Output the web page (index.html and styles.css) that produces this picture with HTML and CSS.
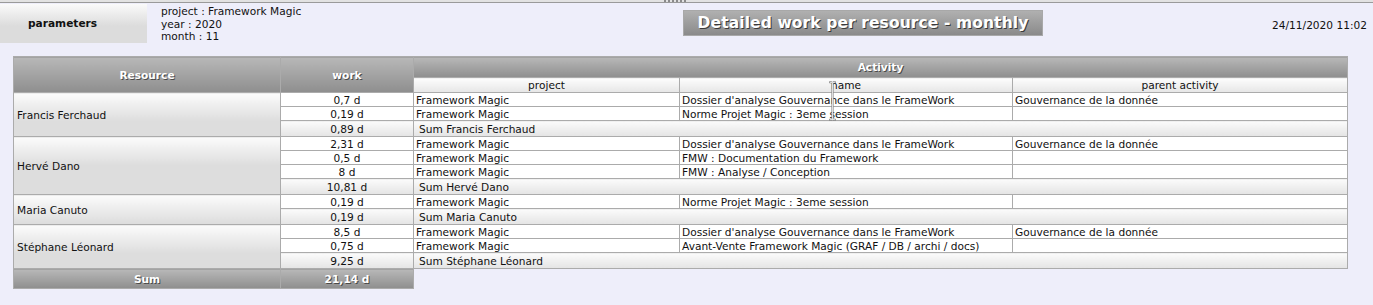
FILE: index.html
```html
<!DOCTYPE html>
<html>
<head>
<meta charset="utf-8">
<link rel="stylesheet" href="styles.css">
</head>
<body>
<div class="topbar"><span class="handle"></span></div>
<div class="header">
  <div class="params-btn">parameters</div>
  <div class="params-info">
    <div>project : Framework Magic</div>
    <div>year : 2020</div>
    <div>month : 11</div>
  </div>
  <div class="title-cell"><div class="title">Detailed work per resource - monthly</div></div>
  <div class="date">24/11/2020 11:02</div>
</div>
<table class="report">
  <colgroup>
    <col class="c-res"><col class="c-work"><col class="c-proj"><col class="c-name"><col class="c-parent">
  </colgroup>
  <thead>
    <tr class="h1">
      <th rowspan="2" class="dark span2">Resource</th>
      <th rowspan="2" class="dark span2">work</th>
      <th colspan="3" class="dark">Activity</th>
    </tr>
    <tr class="h2">
      <th class="light">project</th>
      <th class="light">name</th>
      <th class="light">parent activity</th>
    </tr>
  </thead>
  <tbody>
    <tr><td rowspan="3" class="res">Francis Ferchaud</td><td class="work">0,7 d</td><td>Framework Magic</td><td>Dossier d'analyse Gouvernance dans le FrameWork</td><td>Gouvernance de la donnée</td></tr>
    <tr><td class="work">0,19 d</td><td>Framework Magic</td><td>Norme Projet Magic : 3eme session</td><td></td></tr>
    <tr class="sum"><td class="work">0,89 d</td><td colspan="3" class="sumlabel">Sum Francis Ferchaud</td></tr>

    <tr><td rowspan="4" class="res">Hervé Dano</td><td class="work">2,31 d</td><td>Framework Magic</td><td>Dossier d'analyse Gouvernance dans le FrameWork</td><td>Gouvernance de la donnée</td></tr>
    <tr><td class="work">0,5 d</td><td>Framework Magic</td><td>FMW : Documentation du Framework</td><td></td></tr>
    <tr><td class="work">8 d</td><td>Framework Magic</td><td>FMW : Analyse / Conception</td><td></td></tr>
    <tr class="sum"><td class="work">10,81 d</td><td colspan="3" class="sumlabel">Sum Hervé Dano</td></tr>

    <tr><td rowspan="2" class="res">Maria Canuto</td><td class="work">0,19 d</td><td>Framework Magic</td><td>Norme Projet Magic : 3eme session</td><td></td></tr>
    <tr class="sum"><td class="work">0,19 d</td><td colspan="3" class="sumlabel">Sum Maria Canuto</td></tr>

    <tr><td rowspan="3" class="res">Stéphane Léonard</td><td class="work">8,5 d</td><td>Framework Magic</td><td>Dossier d'analyse Gouvernance dans le FrameWork</td><td>Gouvernance de la donnée</td></tr>
    <tr><td class="work">0,75 d</td><td>Framework Magic</td><td>Avant-Vente Framework Magic (GRAF / DB / archi / docs)</td><td></td></tr>
    <tr class="sum"><td class="work">9,25 d</td><td colspan="3" class="sumlabel">Sum Stéphane Léonard</td></tr>
  </tbody>
  <tfoot>
    <tr class="total"><td class="dark">Sum</td><td class="dark">21,14 d</td></tr>
  </tfoot>
</table>
<svg class="cursor" width="7" height="40" viewBox="0 0 7 40">
  <path d="M0.5 0.5 H2.8 L3.5 1.2 L4.2 0.5 H6.5 V2 H4.3 V38 H6.5 V39.5 H4.2 L3.5 38.8 L2.8 39.5 H0.5 V38 H2.7 V2 H0.5 Z" fill="#fff" stroke="#555" stroke-width="0.5"/>
</svg>
</body>
</html>
```

FILE: styles.css
```css
* { box-sizing: border-box; }
html, body { margin: 0; padding: 0; }
body {
  background: #eeeefa;
  font-family: "DejaVu Sans", Verdana, sans-serif;
  font-size: 10.6px;
  color: #111;
  position: relative;
  height: 305px;
  overflow: hidden;
}
.topbar {
  height: 3px;
  background: #e2e2e2;
  border-bottom: 1px solid #9a9a9a;
  position: relative;
}
.handle {
  position: absolute;
  left: 664px;
  top: 0;
  width: 22px;
  height: 2px;
  background: repeating-linear-gradient(90deg, #8a8a8a 0 2px, transparent 2px 4px);
}
.header {
  display: grid;
  grid-template-columns: 147px 536px 360px 1fr;
  height: 38px;
  margin-top: 1px;
}
.params-btn {
  background: linear-gradient(#fafafa, #dcdcdc 22px, #dcdcdc);
  font-weight: bold;
  display: flex;
  align-items: center;
  padding-left: 28px;
  padding-bottom: 1px;
}
.params-info {
  padding-left: 14px;
  padding-top: 1px;
  line-height: 12.5px;
}
.title-cell { padding-top: 6px; }
.title {
  height: 26px;
  background: linear-gradient(#b0b0b0, #8a8a8a);
  border: 1px solid #a8a8a8;
  color: #fff;
  font-weight: bold;
  font-size: 15.5px;
  text-align: center;
  line-height: 25px;
  text-shadow: 1px 1px 0 #3a3a3a;
  letter-spacing: 0.1px;
}
.date {
  text-align: right;
  padding-right: 6px;
  padding-top: 15px;
}
.report {
  margin: 14px 0 0 13px;
  border-collapse: collapse;
  table-layout: fixed;
  width: 1334px;
}
.c-res { width: 267px; }
.c-work { width: 133px; }
.c-proj { width: 266px; }
.c-name { width: 333px; }
.c-parent { width: 335px; }
.report th, .report td {
  border: 1px solid #ababab;
  padding: 0 2px;
  line-height: 13px;
  height: 14px;
  white-space: nowrap;
  overflow: hidden;
}
.report td { background: #fff; padding-top: 2px; line-height: 11px; }
.report .dark {
  background: linear-gradient(#b8b8b8, #8e8e8e);
  color: #fff;
  font-weight: bold;
  text-align: center;
  text-shadow: 1px 1px 0 #4a4a4a;
}
.h1 th { height: 21px; padding-top: 1px; }
.h1 th.span2 { padding-top: 2px; }
.h2 th { height: 15px; }
.report .light {
  background: linear-gradient(#fdfdfd, #e6e6e6);
  font-weight: normal;
  text-align: center;
}
.report td.res {
  background: linear-gradient(#fbfbfb, #dddddd 28px, #dddddd);
  vertical-align: middle;
  padding-left: 3px;
}
.report td.work { text-align: center; }
.sum td { height: 16px; }
.report .sum td {
  background: linear-gradient(#fbfbfb, #e4e4e4);
  padding-top: 1px;
}
.sumlabel { padding-left: 5px !important; }
.report .total td { height: 20px; padding-top: 1px; line-height: 13px; }
.cursor {
  position: absolute;
  left: 829px;
  top: 81px;
}
```
